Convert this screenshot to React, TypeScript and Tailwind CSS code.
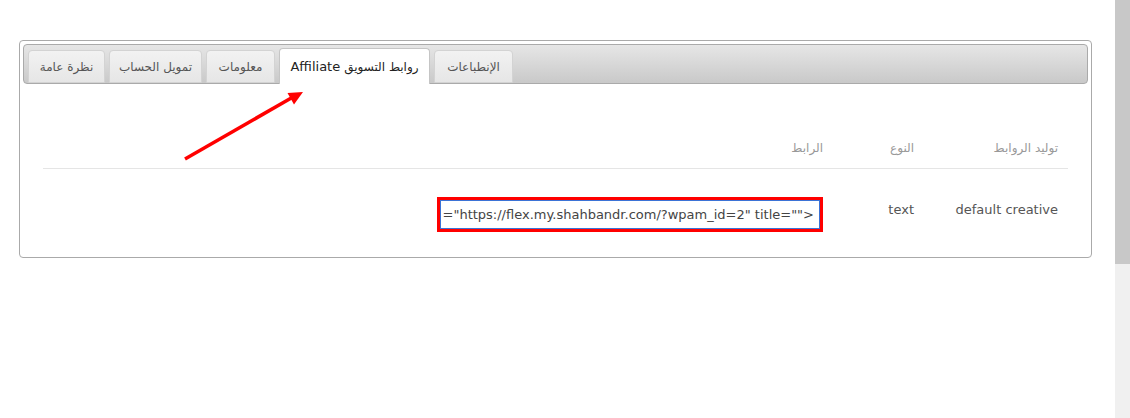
import React from "react";

const tabs = [
  { id: 1, label: "نظرة عامة", width: "w-[77px]" },
  { id: 2, label: "تمويل الحساب", width: "w-[93px]" },
  { id: 3, label: "معلومات", width: "w-[69px]" },
  { id: 4, label: "روابط التسويق", width: "w-[151px]", active: true },
  { id: 5, label: "الإنطباعات", width: "w-[79px]" },
];

const font = { fontFamily: '"DejaVu Sans", Verdana, sans-serif' };

const Tab = ({
  label,
  width,
  active,
}: {
  label: string;
  width: string;
  active?: boolean;
}) => {
  if (active) {
    return (
      <div
        dir="rtl"
        className={`${width} mb-[-1px] flex h-[36px] items-center justify-center gap-[4px] rounded-t-[4px] border border-b-0 border-[#c5c5c5] bg-white text-[#222]`}
      >
        <span className="text-[12px]">{label}</span>
        <span className="text-[13px]">Affiliate</span>
      </div>
    );
  }
  return (
    <div
      dir="rtl"
      className={`${width} flex h-[33px] items-center justify-center rounded-t-[4px] border border-[#d3d3d3] bg-gradient-to-b from-[#f2f2f2] to-[#e6e6e6] text-[12px] text-[#555]`}
    >
      {label}
    </div>
  );
};

const App = () => {
  return (
    <div className="flex h-[418px] w-full overflow-hidden bg-white" style={font}>
      <div className="relative flex-1 pl-[19px] pr-[23px] pt-[40px]">
        <div className="rounded-[4px] border border-[#aaaaaa] p-[3px]">
          {/* Tab header */}
          <div className="flex h-[40px] items-end gap-[4px] rounded-[4px] border border-[#aaaaaa] bg-gradient-to-b from-[#e6e6e6] to-[#c9c9c9] pl-[4px]">
            {tabs.map((t) => (
              <Tab key={t.id} label={t.label} width={t.width} active={t.active} />
            ))}
          </div>

          {/* Table */}
          <div className="px-[20px] pb-[22px] pt-[44px]">
            <div className="flex border-b border-[#e5e5e5] text-[12px] leading-[20px] text-[#999]">
              <div dir="rtl" className="flex-1 px-[10px] py-[10px] text-right">
                الرابط
              </div>
              <div dir="rtl" className="w-[91px] py-[10px] pr-[10px] text-right">
                النوع
              </div>
              <div dir="rtl" className="w-[144px] py-[10px] pr-[10px] text-right">
                توليد الروابط
              </div>
            </div>
            <div className="flex text-[13px] text-[#555]">
              <div className="flex flex-1 justify-end pr-[10px] pt-[28px]">
                <div className="h-[35px] w-[386px] border-[3px] border-[#ff0000]">
                  <div className="flex h-full items-center justify-end whitespace-nowrap border border-[#3b73d6] bg-white pr-[5px] text-[#444]">
                    {'="https://flex.my.shahbandr.com/?wpam_id=2" title="">'}
                  </div>
                </div>
              </div>
              <div className="w-[91px] pr-[10px] pt-[32px] text-right leading-[18px]">text</div>
              <div className="w-[144px] pr-[10px] pt-[32px] text-right leading-[18px]">
                default creative
              </div>
            </div>
          </div>
        </div>

        {/* Annotation arrow */}
        <svg
          className="pointer-events-none absolute left-0 top-0"
          width="400"
          height="200"
          viewBox="0 0 400 200"
        >
          <line x1="185" y1="159" x2="293" y2="97" stroke="#ff0000" strokeWidth="3.5" />
          <polygon points="303,92 294,104.5 287.5,93" fill="#ff0000" />
        </svg>
      </div>

      {/* Scrollbar */}
      <div className="flex w-[15px] flex-col bg-[#f0f0f0]">
        <div className="h-[264px] bg-[#c8c8c8]" />
      </div>
    </div>
  );
};

export default App;
